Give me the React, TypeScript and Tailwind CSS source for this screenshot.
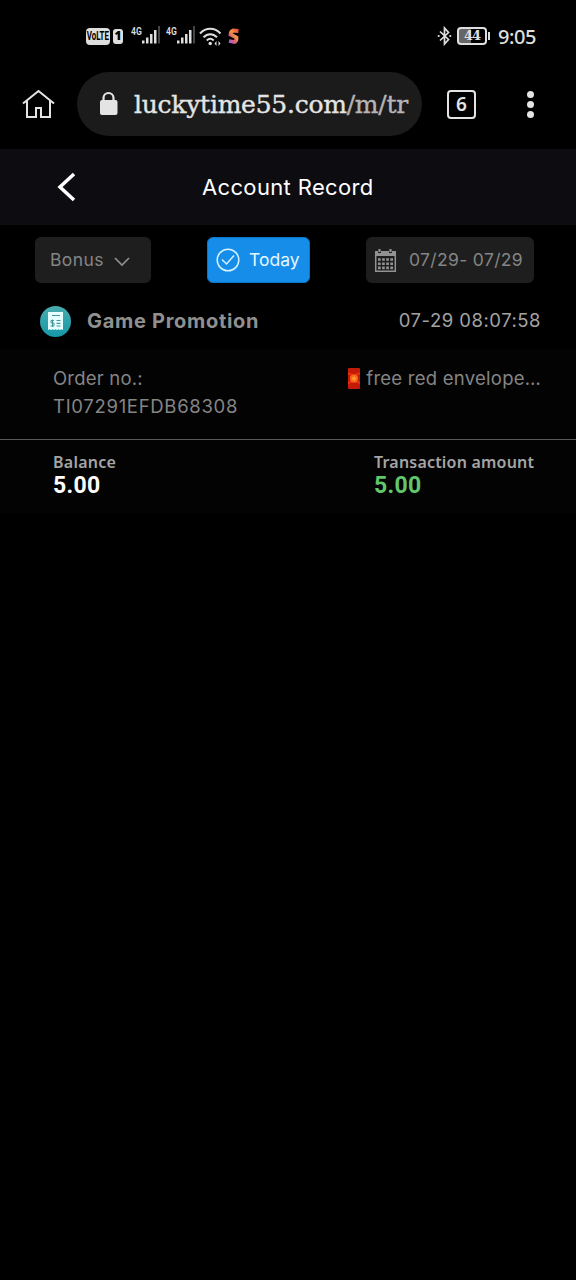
import React from "react";

const SignalIcon = () => (
  <div className="flex h-[22px]">
    <span className="w-[10px] origin-left scale-x-75 font-['Roboto'] text-[11.500px] leading-[12px] font-semibold whitespace-nowrap">
      4G
    </span>
    <svg width="20" height="22" viewBox="0 0 20 22" className="ml-px">
      <g fill="#dedede">
        <rect x="0" y="15.500" width="2.500" height="3" />
        <rect x="4" y="12.500" width="2.500" height="6" />
        <rect x="8" y="9" width="2.500" height="9.500" />
        <rect x="12" y="5" width="2.500" height="13.500" />
      </g>
      <rect x="16" y="1" width="2" height="17.500" fill="#454545" />
    </svg>
  </div>
);

const StatusBar = () => (
  <div className="flex h-[72px] items-center pl-[86px] pr-10 text-[#dedede]">
    <div className="flex h-[17px] w-6 items-center justify-center rounded-[4px] bg-[#dedede] font-['Roboto'] text-[12px] font-bold text-black">
      <span className="scale-x-[0.66]">VoLTE</span>
    </div>
    <div className="ml-[3px] flex h-[15px] w-[10px] items-center justify-center rounded-[3px] bg-[#dedede] font-['Noto_Sans'] text-xs font-black text-black">
      1
    </div>
    <div className="ml-[8px] w-[35px]">
      <SignalIcon />
    </div>
    <div className="w-[33px]">
      <SignalIcon />
    </div>
    <svg width="24" height="20" viewBox="0 0 24 20" className="mt-px" fill="none" stroke="#dedede" strokeWidth="2">
      <path d="M1 6.500C7 .3 15.500 .3 21.500 6.500M4.500 10.200C8.500 6.100 14 6.100 18 10.200M7.800 13.500C10 11.300 12.500 11.300 14.700 13.500" />
      <circle cx="11.200" cy="16.500" r="1.700" fill="#dedede" stroke="none" />
      <path d="M17.500 14l-2 2.500 2 2.500zM19.500 14l2 2.500-2 2.500z" fill="#dedede" stroke="none" />
    </svg>
    <svg width="12" height="17" viewBox="0 0 12 17" className="ml-[5px]">
      <defs>
        <linearGradient id="spark" x1="1" y1="0" x2="0" y2="1">
          <stop offset="0" stopColor="#ec493c" />
          <stop offset=".4" stopColor="#f29a40" />
          <stop offset=".65" stopColor="#df6370" />
          <stop offset="1" stopColor="#9c62d2" />
        </linearGradient>
      </defs>
      <path d="M10.500 3L5 2.500Q2.500 3.500 2.500 6.500L8.500 9.500Q9 12.500 6.500 14L1 13" fill="none" stroke="url(#spark)" strokeWidth="3.800" />
    </svg>
    <svg width="15" height="20" viewBox="0 0 15 20" className="ml-auto" fill="none" stroke="#dedede" strokeWidth="1.700">
      <path d="M3 5.500l8.500 8-4 4.500V2l4 4.500-8.500 8" />
      <circle cx="1.700" cy="10" r="1.100" fill="#dedede" stroke="none" />
      <circle cx="13.300" cy="10" r="1.100" fill="#dedede" stroke="none" />
    </svg>
    <div className="ml-[5px] flex h-[18px] w-[30px] items-center justify-center rounded-[4px] border-2 border-[#dedede] bg-linear-to-r from-[#666] from-45% to-black to-45% font-['DejaVu_Serif'] text-[13px] font-bold tracking-[-1px]">
      44
    </div>
    <div className="ml-px h-2 w-[2px] bg-[#dedede]" />
    <div className="mt-[2px] ml-[8px] w-[38px] font-['Noto_Sans'] text-[20px] leading-6 font-medium tracking-[-0.400px] whitespace-nowrap">
      9:05
    </div>
  </div>
);

const BrowserBar = () => (
  <div className="flex h-[77px] items-start text-[#e4e4e4]">
    <svg width="34" height="32" viewBox="0 0 34 32" className="mt-4 ml-[22px]" fill="none" stroke="#e4e4e4" strokeWidth="2">
      <path d="M1 15.500L16.500 3 32 15.500M5 13v16h9V20h5v9h9V13" />
    </svg>
    <div className="ml-[21px] flex h-16 w-[345px] items-center rounded-full bg-[#1b1b1b] pl-[22px]">
      <svg width="20" height="26" viewBox="0 0 20 26" fill="#e4e4e4">
        <rect x="1" y="9" width="17.500" height="15" rx="2" />
        <path d="M4.500 10V7a5 5 0 0 1 10 0v3" fill="none" stroke="#e4e4e4" strokeWidth="2.200" />
      </svg>
      <span className="mt-px ml-[15px] font-['DejaVu_Serif',serif] text-[25px] leading-8 tracking-[-0.250px] whitespace-nowrap [-webkit-text-stroke:0.400px]">
        luckytime55.com<span className="text-[#b5b5b5]">/m/tr</span>
      </span>
    </div>
    <div className="mt-[18px] ml-[25px] flex size-[29px] items-center justify-center rounded-[4px] border-2 border-[#e4e4e4] font-['Noto_Sans'] text-[19px] font-semibold">
      6
    </div>
    <div className="mt-[19px] ml-[51px] flex flex-col gap-[3px]">
      <i className="size-[7px] rounded-full bg-[#e4e4e4]" />
      <i className="size-[7px] rounded-full bg-[#e4e4e4]" />
      <i className="size-[7px] rounded-full bg-[#e4e4e4]" />
    </div>
  </div>
);

const CalendarIcon = () => (
  <svg width="23" height="25" viewBox="0 0 23 25" fill="none" stroke="#929292">
    <path d="M1.700 6v17.300h19.600V6" strokeWidth="1.500" />
    <path d="M1 3h3v2h3V3h8v2h3V3h4v5H1z" fill="#929292" stroke="none" />
    <path d="M5.500 1v3M16.500 1v3" strokeWidth="2.200" />
    <path d="M4 11.500h15M4 15.700h15M4 19.900h15" strokeWidth="2.600" strokeDasharray="2.700 1.400" />
  </svg>
);

const Filters = () => (
  <div className="flex h-[58px] items-end pl-[35px] text-[17.500px] text-[#858585]">
    <button className="flex h-[46px] w-[116px] items-center rounded-md bg-[#1e1e1e] pl-[15px]">
      <span className="w-[64px] text-left tracking-[0.400px]">Bonus</span>
      <svg width="16" height="10" viewBox="0 0 16 10" className="mt-[3px]" fill="none" stroke="#929292" strokeWidth="1.600">
        <path d="M1 1l7 7 7-7" />
      </svg>
    </button>
    <button className="ml-[56px] flex h-[46px] w-[103px] items-center rounded-md border border-[#0876cb] bg-[#168ee9] pl-[8px] text-[#e4f6ff]">
      <svg width="24" height="24" viewBox="0 0 24 24" fill="none" stroke="#d4f2ff" strokeWidth="1.500">
        <circle cx="12" cy="12" r="10.800" />
        <path d="M6 11.500l4.500 4.500 7.500-8.500" />
      </svg>
      <span className="ml-[9px]">Today</span>
    </button>
    <button className="ml-[56px] flex h-[46px] w-[168px] items-center rounded-md bg-[#1e1e1e] pl-[8px]">
      <CalendarIcon />
      <span className="ml-[12px] tracking-[0.350px] whitespace-nowrap">07/29- 07/29</span>
    </button>
  </div>
);

const Record = () => (
  <section>
    <div className="flex h-[67px] items-center pl-[39px] pr-[35px]">
      <svg width="33" height="33" viewBox="0 0 33 33" className="mt-[9px]">
        <defs>
          <linearGradient id="teal" x2="0" y2="1">
            <stop stopColor="#4babae" />
            <stop offset="1" stopColor="#1599a9" />
          </linearGradient>
        </defs>
        <circle cx="16.500" cy="16.500" r="15.500" fill="url(#teal)" />
        <path d="M9 7h15v18l-1.500-.8-1.500.8-1.500-.8-1.500.8-1.500-.8-1.500.8-1.500-.8-1.500.8-1.500-.8-1.500.8z" fill="#e6ffff" />
        <path d="M13 10.500h8M17.500 15.500h4M17.500 18.300h4M17.500 21h4" stroke="#45979d" strokeWidth="1.200" />
        <path d="M15 15.500h-3v2.500h3v3h-3.500M13.500 14.500v7.500" stroke="#45979d" fill="none" />
      </svg>
      <h2 className="mt-[8px] ml-[15px] text-[20px] font-bold tracking-[0.700px] text-[#909090]">Game Promotion</h2>
      <time className="mt-[8px] ml-auto text-[18.500px] tracking-[0.500px] text-[#a3a3a3]">07-29 08:07:58</time>
    </div>
    <div className="flex h-[90px] justify-between border-b border-[#575b57] bg-[#030303] pt-[14px] pl-[53px] pr-[35px] text-[18.500px] leading-7 text-[#858585]">
      <p className="tracking-[0.200px]">
        Order no.:
        <br />
        <span className="tracking-[0.700px]">TI07291EFDB68308</span>
      </p>
      <div className="flex h-7 items-center">
        <svg width="12" height="21" viewBox="0 0 12 21" className="mr-[6px]">
          <rect width="12" height="21" rx="1" fill="#c41a08" />
          <path d="M0 5Q6 9 12 5M0 15Q6 12 12 15" fill="none" stroke="#ed300f" strokeWidth="2" />
          <circle cx="6" cy="10.500" r="4" fill="#f36a17" />
          <circle cx="6" cy="10.500" r="2" fill="#fc9a2c" />
        </svg>
        <span className="tracking-[0.250px]">free red envelope…</span>
      </div>
    </div>
    <div className="flex h-[73px] bg-[#030303] pt-[12px] pl-[53px] font-['Noto_Sans'] text-[16px] leading-5 font-semibold text-[#a5a5a5]">
      <div className="w-[321px]">
        <p className="tracking-[0.250px]">Balance</p>
        <p className="font-['Roboto'] text-[23px] leading-7 font-bold tracking-[0.300px] text-white">5.00</p>
      </div>
      <div>
        <p className="tracking-[0.200px] whitespace-nowrap">Transaction amount</p>
        <p className="font-['Roboto'] text-[23px] leading-7 font-bold tracking-[0.300px] text-[#62c66b]">5.00</p>
      </div>
    </div>
  </section>
);

const App = () => {
  return (
    <main className="min-h-screen w-[576px] overflow-hidden bg-black font-['Inter',sans-serif]">
      <StatusBar />
      <BrowserBar />
      <header className="flex h-[76px] items-center bg-[#0d0d11] pl-[57px]">
        <svg width="20" height="30" viewBox="0 0 20 30" fill="none" stroke="white" strokeWidth="3.500">
          <path d="M17 2L3 15l14 13" />
        </svg>
        <h1 className="ml-[125px] text-[22px] tracking-[0.350px] text-white">Account Record</h1>
      </header>
      <Filters />
      <Record />
    </main>
  );
};

export default App;
